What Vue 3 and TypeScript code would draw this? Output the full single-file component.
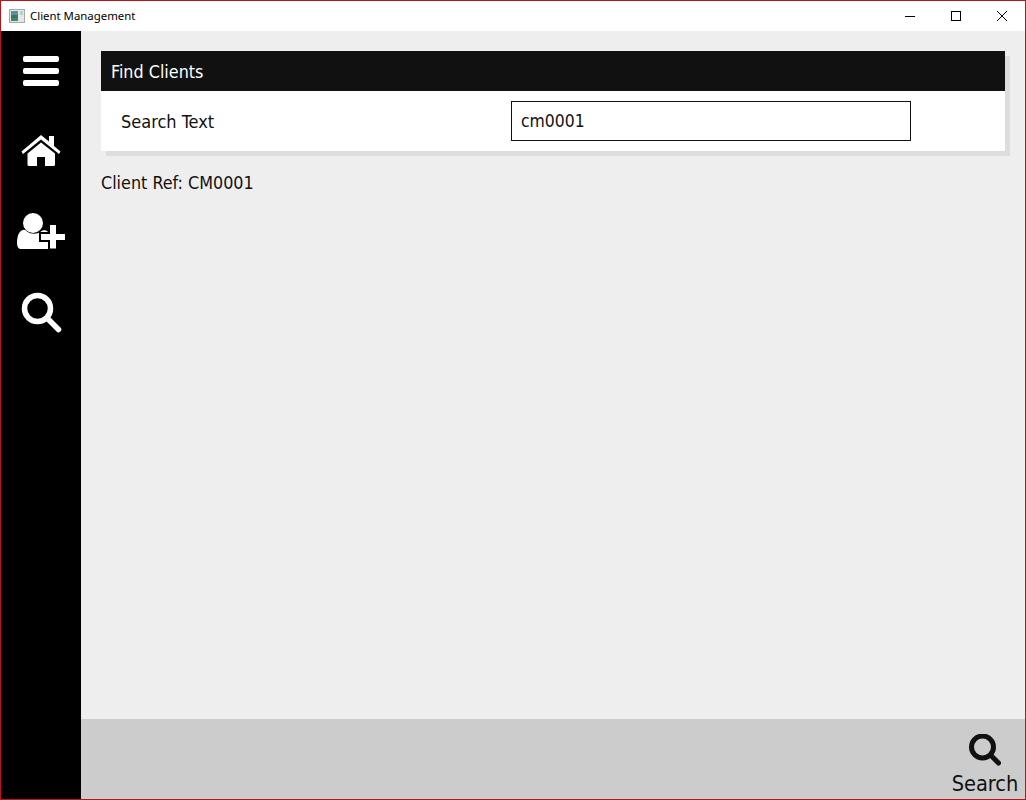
<script setup lang="ts">
const searchText: string = 'cm0001'
</script>

<template>
  <div class="window">
    <header class="titlebar">
      <svg class="app-icon" width="16" height="16" viewBox="0 0 16 16">
        <rect x="0.500" y="1.500" width="15" height="13" fill="#e6e6e6" stroke="#a8a8a8" />
        <rect x="2" y="3" width="7" height="10" fill="#3f6f78" />
        <rect x="2" y="3" width="7" height="4" fill="#5d8f9c" />
        <rect x="2" y="10" width="7" height="3" fill="#3d8a5c" />
        <rect x="11" y="3" width="3" height="4" fill="#b9cfc4" />
      </svg>
      <span class="title">Client Management</span>
      <div class="controls">
        <span class="ctl"><svg width="12" height="12" viewBox="0 0 12 12"><path d="M1 6.500h10" stroke="#000" fill="none" /></svg></span>
        <span class="ctl"><svg width="12" height="12" viewBox="0 0 12 12"><rect x="1.500" y="1.500" width="9" height="9" stroke="#000" fill="none" /></svg></span>
        <span class="ctl"><svg width="12" height="12" viewBox="0 0 12 12"><path d="M1 1l10 10M11 1L1 11" stroke="#000" fill="none" /></svg></span>
      </div>
    </header>
    <div class="body">
      <nav class="sidebar">
        <div class="nav-item">
          <svg width="80" height="80" viewBox="0 0 80 80" fill="#fff">
            <rect x="22" y="25" width="36" height="6" rx="2" />
            <rect x="22" y="37" width="36" height="6" rx="2" />
            <rect x="22" y="49" width="36" height="6" rx="2" />
          </svg>
        </div>
        <div class="nav-item">
          <svg width="80" height="80" viewBox="0 0 80 80" fill="#fff">
            <path d="M40 24 48 30.500V25h5v10l6.500 5.500L58 43 40 28.500 22 43l-1.500-2.500z" />
            <path d="M40 31.500 54 42.500v11a1.500 1.500 0 0 1-1.500 1.500H44V46h-8v9h-8a1.500 1.500 0 0 1-1.500-1.500v-11z" />
          </svg>
        </div>
        <div class="nav-item">
          <svg width="80" height="80" viewBox="0 0 80 80" fill="#fff">
            <circle cx="32" cy="32" r="10" />
            <path d="M16 52c0-7 2-12 6-13 2-.5 3 .5 4 1.500 4 3 10 3 14 0 1-1 3-1.500 5-1l3 2v16.500H20c-2.500 0-4-2-4-6z" />
            <path d="M52 32v26" stroke="#000" stroke-width="10" fill="none" />
            <path d="M38 46h27" stroke="#000" stroke-width="10" fill="none" />
            <path d="M49 34h6v9h9v6h-9v8.500h-6V49h-9v-6h9z" />
          </svg>
        </div>
        <div class="nav-item">
          <svg width="80" height="80" viewBox="0 0 80 80" fill="none" stroke="#fff">
            <circle cx="36.500" cy="37.500" r="13" stroke-width="5.500" />
            <path d="M46.500 47.500l11 11" stroke-width="5.500" stroke-linecap="round" />
          </svg>
        </div>
      </nav>
      <div class="main">
        <main class="content">
          <section class="panel">
            <h2 class="panel-head">Find Clients</h2>
            <div class="panel-row">
              <label class="row-label" for="search-text">Search Text</label>
              <input id="search-text" class="row-input" type="text" :value="searchText" />
            </div>
          </section>
          <p class="client-ref">Client Ref: CM0001</p>
        </main>
        <footer class="footer">
          <div class="footer-btn">
            <svg width="32" height="32" viewBox="0 0 32 32" fill="none" stroke="#111">
              <circle cx="13.500" cy="13" r="11" stroke-width="5" />
              <path d="M22 21.500l7.500 7.500" stroke-width="5" stroke-linecap="round" />
            </svg>
            <span class="footer-label">Search</span>
          </div>
        </footer>
      </div>
    </div>
  </div>
</template>

<style>
html, body { margin: 0; overflow: hidden; }
</style>

<style scoped>
.window {
  box-sizing: border-box;
  width: 1026px;
  height: 800px;
  border: 1px solid #b8141c;
  display: flex;
  flex-direction: column;
  font-family: "DejaVu Sans Condensed", "DejaVu Sans", sans-serif;
  color: #111;
  background: #eee;
}
.titlebar {
  height: 30px;
  flex: none;
  background: #fff;
  display: flex;
  align-items: center;
  padding-left: 8px;
}
.app-icon { margin-right: 5px; }
.title {
  font-family: "Noto Sans", "Open Sans", sans-serif;
  font-size: 11.4px;
  line-height: 30px;
  height: 30px;
  color: #000;
}
.controls { margin-left: auto; display: flex; }
.ctl {
  width: 46px;
  height: 30px;
  display: flex;
  align-items: center;
  justify-content: center;
}
.body { flex: 1; display: flex; min-height: 0; }
.sidebar {
  width: 80px;
  flex: none;
  background: #000;
  display: flex;
  flex-direction: column;
}
.nav-item { width: 80px; height: 80px; display: block; }
.nav-item svg { display: block; }
.main { flex: 1; display: flex; flex-direction: column; min-width: 0; }
.content { flex: 1; padding: 20px 20px 0; }
.panel {
  background: #fff;
  box-shadow: 5px 5px 0 #ddd;
}
.panel-head {
  margin: 0;
  height: 40px;
  line-height: 42px;
  padding-left: 10px;
  background: #111;
  color: #fff;
  font-size: 17.8px;
  font-weight: 400;
}
.panel-row {
  height: 60px;
  display: flex;
  align-items: center;
  padding-left: 20px;
}
.row-label { width: 390px; font-size: 18px; }
.row-input {
  box-sizing: border-box;
  width: 400px;
  height: 40px;
  border: 1px solid #111;
  border-radius: 0;
  outline: none;
  padding: 0 9px;
  font: inherit;
  font-size: 17.4px;
  color: #111;
  background: #fff;
}
.client-ref { margin: 21px 0 0; font-size: 17.8px; line-height: 22px; }
.footer {
  height: 80px;
  flex: none;
  background: #ccc;
  display: flex;
  justify-content: flex-end;
}
.footer-btn {
  width: 80px;
  display: flex;
  flex-direction: column;
  align-items: center;
  padding-top: 15px;
  box-sizing: border-box;
}
.footer-btn svg { display: block; }
.footer-label { font-size: 21.6px; line-height: 26px; margin-top: 5px; }
</style>
